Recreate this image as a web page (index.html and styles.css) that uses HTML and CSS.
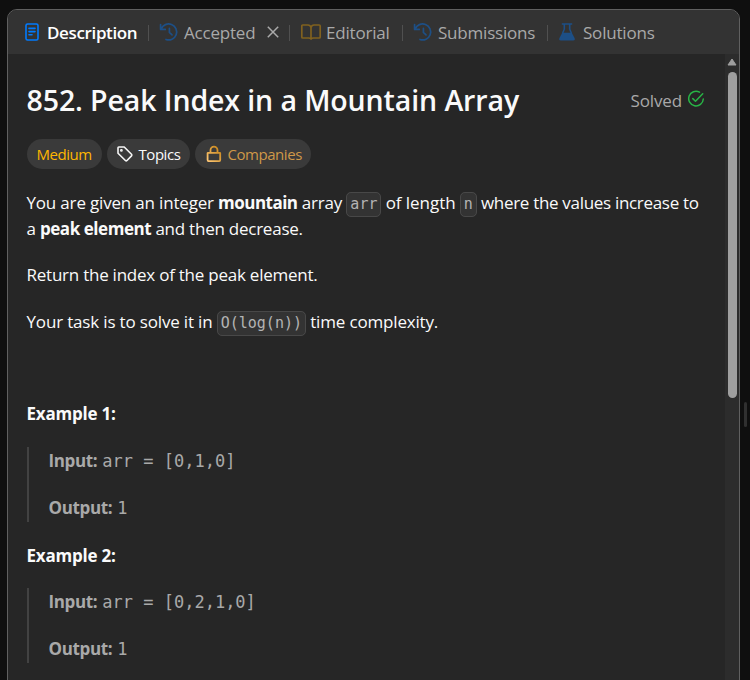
FILE: index.html
```html
<!DOCTYPE html>
<html lang="en">
<head>
<meta charset="utf-8">
<title>852. Peak Index in a Mountain Array</title>
<link rel="stylesheet" href="styles.css">
</head>
<body>
<main class="panel">
  <nav class="tabs">
    <div class="tab tab-description active"><svg class="icon" viewBox="0 0 18 20" fill="none" stroke="#007bff" stroke-width="1.6" stroke-linecap="round"><rect x="3" y="2" width="12" height="16" rx="1.6"/><path d="M6 6.4h6M6 9.6h6M6 12.8h3"/></svg><span>Description</span></div>
    <div class="tab tab-accepted"><svg class="icon history" viewBox="0 0 20 20" fill="none" stroke="#1d4f86" stroke-width="1.7" stroke-linecap="round" stroke-linejoin="round"><path d="M1.6 2.6v4.8h4.7M2.2 7A8 8 0 1 1 7 17.5M10.4 6.4v4l2.6 2.4"/></svg><span>Accepted</span><svg class="close" viewBox="0 0 14 14" stroke="#aaa" stroke-width="1.5"><path d="M1.8 1.8l10.4 10.4M12.2 1.8L1.8 12.2"/></svg></div>
    <div class="tab tab-editorial"><svg class="icon book" viewBox="0 0 22 20" fill="none" stroke="#80611f" stroke-width="1.7" stroke-linejoin="round"><path d="M11 5.5Q10.3 3 8 3H2.8Q1.8 3 1.8 4v11q0 1 1 1h5.8q1.6 0 2.4 1 .8-1 2.4-1h5.8q1 0 1-1V4q0-1-1-1H14q-2.3 0-3 2.5V16.5"/></svg><span>Editorial</span></div>
    <div class="tab tab-submissions"><svg class="icon history" viewBox="0 0 20 20" fill="none" stroke="#1d4f86" stroke-width="1.7" stroke-linecap="round" stroke-linejoin="round"><path d="M1.6 2.6v4.8h4.7M2.2 7A8 8 0 1 1 7 17.5M10.4 6.4v4l2.6 2.4"/></svg><span>Submissions</span></div>
    <div class="tab tab-solutions"><svg class="icon flask" viewBox="0 0 18 20"><path d="M4.4 2h9.2M6.3 2v5.2L4.7 11M11.7 2v5.2L13.3 11" fill="none" stroke="#1d4f86" stroke-width="1.6" stroke-linecap="round"/><path d="M4.2 10.8h9.6l2.7 5.1q1 2.5-1.3 2.5H2.8Q.5 18.4 1.5 15.9z" fill="#1d4f86"/></svg><span>Solutions</span></div>
  </nav>
  <div class="body">
    <article class="content">
      <header class="heading">
        <h1>852. Peak Index in a Mountain Array</h1>
        <div class="solved"><span>Solved</span><svg viewBox="0 0 18 18" fill="none" stroke="#28b446" stroke-width="1.5" stroke-linecap="round" stroke-linejoin="round"><path d="M12.5 2.2A7.3 7.3 0 1 0 16.3 9M5.8 8.6l2.7 2.7 7.2-7.5"/></svg></div>
      </header>
      <div class="chips">
        <span class="chip medium"><span>Medium</span></span>
        <span class="chip topics"><svg viewBox="0 0 18 18" fill="none" stroke="#f5f5f5" stroke-width="1.6" stroke-linejoin="round"><path d="M2 2.8Q2 2 2.8 2H8.2L15.5 9.3q.8.8 0 1.6L11 15.5q-.8.8-1.6 0L2 8.2z"/><circle cx="5.4" cy="5.4" r=".6"/></svg><span>Topics</span></span>
        <span class="chip companies"><svg viewBox="0 0 18 18" fill="none" stroke="url(#gold)" stroke-width="1.8"><defs><linearGradient id="gold" x1="0" y1="1" x2="1" y2="0"><stop stop-color="#ffc875"/><stop offset="1" stop-color="#c48113"/></linearGradient></defs><path d="M3.1 7.8h11.8q.3 0 .3.3v7q0 1-1 1H3.6q-1 0-1-1v-7q0-.3.5-.3zM5.5 7.4V5.2a3.5 3.5 0 0 1 7 0v2.2"/></svg><span>Companies</span></span>
      </div>
      <p class="intro"><span class="given">You are given an integer <b>mountain</b> array</span> <code>arr</code> <span class="length">of length</span> <code>n</code> <span class="where">where the values increase to</span><br><span class="peak">a <b>peak element</b> and then decrease.</span></p>
      <p>Return the index of the peak element.</p>
      <p class="task">Your task is to solve it in <code>O(log(n))</code> <span>time complexity.</span></p>
      <p>&nbsp;</p>
      <p class="example"><b>Example 1:</b></p>
      <div class="sample"><div><b>Input:</b><samp>arr = [0,1,0]</samp></div><div><b>Output:</b><samp>1</samp></div></div>
      <p class="example second"><b>Example 2:</b></p>
      <div class="sample"><div><b>Input:</b><samp>arr = [0,2,1,0]</samp></div><div><b>Output:</b><samp>1</samp></div></div>
    </article>
    <div class="scrollbar"><svg viewBox="0 0 10 8"><path d="M5 1L9 7H1z" fill="#9f9f9f" stroke="#9f9f9f" stroke-linejoin="round"/></svg><div class="thumb"></div></div>
  </div>
</main>
<div class="resizer"></div>
</body>
</html>
```
FILE: styles.css
```css
* { box-sizing: border-box; }
body { margin: 0; height: 680px; overflow: hidden; background: #0f0f0f; font-family: "Open Sans", "Noto Sans", sans-serif; font-size: 17px; color: #fafafa; display: flex; align-items: flex-start; }
svg { display: block; flex: none; }
.panel { width: 733px; height: 690px; margin: 9px 0 0 7px; flex: none; border: 1px solid #606060; border-radius: 10px; overflow: hidden; background: #262626; }
.tabs { height: 44px; background: #333; display: flex; align-items: center; padding-left: 15px; }
.tab { display: flex; align-items: center; position: relative; color: #a9a9a9; white-space: nowrap; letter-spacing: -.2px; flex: none; }
.tab + .tab::before { content: ""; position: absolute; left: -11px; top: 4px; width: 1px; height: 16px; background: #505050; }
.icon { width: 18px; height: 20px; margin-right: 6px; }
.history { width: 20px; margin-right: 5px; }
.book { width: 22px; margin-right: 4px; }
.tab-description { width: 136px; }
.tab-accepted { width: 141px; }
.tab-editorial { width: 113px; }
.tab-submissions { width: 145px; }
.tab-solutions .icon { margin-right: 7px; }
.active { color: #fff; font-weight: 600; letter-spacing: -.36px; }
.close { width: 14px; height: 14px; margin-left: 11px; }
.body { display: flex; height: 646px; }
.content { flex: 1; padding: 29px 19px 0 18.5px; min-width: 0; }
.heading { display: flex; justify-content: space-between; height: 36px; align-items: center; }
h1 { margin: -2px 0 0; font-size: 28.5px; line-height: 36px; font-weight: 600; letter-spacing: -.1px; white-space: nowrap; }
.solved { display: flex; align-items: center; gap: 5px; color: #a9a9a9; letter-spacing: -.15px; margin: -2px 1px 0 0; }
.solved svg { width: 18px; height: 18px; margin-top: -3px; }
.chips { display: flex; gap: 5px; margin-top: 20px; }
.chip { height: 30px; border-radius: 15px; background: #3a3a3a; padding: 0 10px; font-size: 15px; display: flex; align-items: center; gap: 5px; white-space: nowrap; letter-spacing: -.45px; }
.chip svg { width: 18px; height: 18px; }
.medium { width: 75px; color: #ffb700; }
.topics { width: 83px; padding-left: 9px; }
.companies { width: 116px; color: #cf9848; }
p { margin: 0 0 20.3px; line-height: 26px; white-space: nowrap; letter-spacing: -.24px; }
b { font-weight: 700; letter-spacing: -.52px; }
.intro { margin-top: 21px; }
.given { letter-spacing: -.18px; }
.length { letter-spacing: -.05px; }
.where { letter-spacing: -.31px; }
.peak b { letter-spacing: -.44px; }
.task { letter-spacing: -.17px; }
.example b { letter-spacing: -.22px; }
.sample b { letter-spacing: -.36px; }
code { font: 15px/20px "DejaVu Sans Mono", monospace; letter-spacing: 0; color: #b3b3b3; background: #333; border: 1px solid #484848; border-radius: 5px; padding: 2px 3px 3px; }
.sample { border-left: 2px solid #424242; height: 75px; padding-left: 20px; color: #a9a9a9; margin-bottom: 20px; display: flex; flex-direction: column; gap: 20px; line-height: 27px; }
.sample > div { display: flex; }
samp { font-family: "DejaVu Sans Mono", monospace; font-size: 17px; line-height: 29px; height: 27px; white-space: pre; margin-left: 5px; }
.second { padding-top: 1px; margin-bottom: 18.6px; }
.scrollbar { width: 14px; background: #2c2c2c; padding: 4px 2px; display: flex; flex-direction: column; gap: 5px; }
.scrollbar svg { width: 10px; height: 8px; }
.thumb { width: 9px; height: 326px; margin-left: 1px; margin-top: 1px; border-radius: 5px; background: #9f9f9f; }
.resizer { width: 3px; height: 25px; border-radius: 2px; background: #303030; margin: 402px 0 0 4px; }
```
